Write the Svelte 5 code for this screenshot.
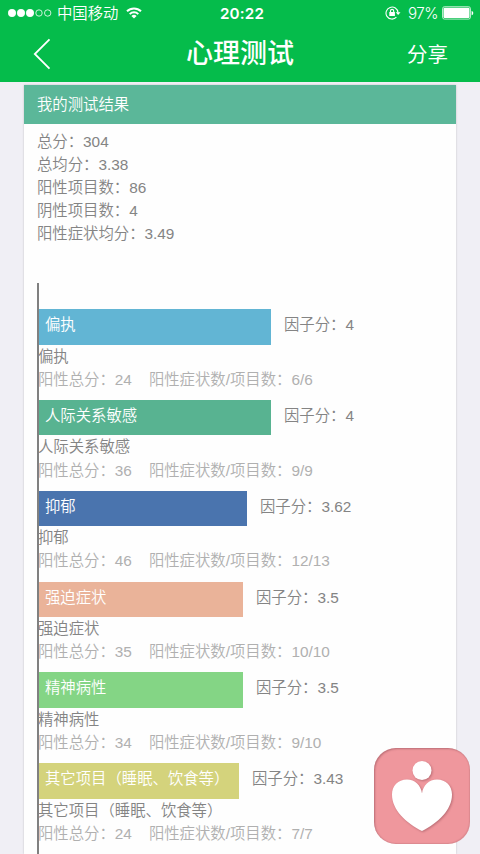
<script>
  const summary = [
    { label: '总分', value: '304' },
    { label: '总均分', value: '3.38' },
    { label: '阳性项目数', value: '86' },
    { label: '阴性项目数', value: '4' },
    { label: '阳性症状均分', value: '3.49' },
  ]

  const factors = [
    { name: '偏执', score: '4', total: 24, items: '6/6', width: 232, color: '#62b5d4' },
    { name: '人际关系敏感', score: '4', total: 36, items: '9/9', width: 232, color: '#58b391' },
    { name: '抑郁', score: '3.62', total: 46, items: '12/13', width: 208, color: '#4a74ae' },
    { name: '强迫症状', score: '3.5', total: 35, items: '10/10', width: 204, color: '#eab399' },
    { name: '精神病性', score: '3.5', total: 34, items: '9/10', width: 204, color: '#84d585' },
    { name: '其它项目（睡眠、饮食等）', score: '3.43', total: 24, items: '7/7', width: 200, color: '#d4d37c' },
  ]
</script>

<div class="screen">
  <header>
    <div class="status">
      <div class="carrier">
        <svg class="signal" viewBox="0 0 44 8" aria-hidden="true">
          <circle cx="4" cy="4" r="3.7" fill="#fff" />
          <circle cx="13" cy="4" r="3.7" fill="#fff" />
          <circle cx="22" cy="4" r="3.7" fill="#fff" />
          <circle cx="31" cy="4" r="3.2" />
          <circle cx="39.7" cy="4" r="3.2" />
        </svg>
        <span>中国移动</span>
        <svg class="wifi" viewBox="0 0 16 12" aria-hidden="true">
          <path d="M1 4.3a10 10 0 0 1 14 0M3.7 7.1a6.2 6.2 0 0 1 8.6 0" />
          <path class="solid" d="M8 11.6 5.4 9a3.7 3.7 0 0 1 5.2 0z" />
        </svg>
      </div>
      <time>20:22</time>
      <div class="power">
        <svg class="lock" viewBox="0 0 16 14" aria-hidden="true">
          <path d="M11.4 11.2a6 6 0 1 1 1.6-4.6" />
          <path class="solid" d="M10.7 6.2h4.8l-2.4 2.7zM4.3 6.1h5.6v4H4.3z" />
          <path d="M5.5 6.3V5a1.6 1.6 0 0 1 3.2 0v1.3" />
        </svg>
        <span class="percent">97%</span>
        <svg class="battery" viewBox="0 0 32 14" aria-hidden="true">
          <rect x=".5" y=".7" width="28" height="12.4" rx="2" />
          <rect class="solid" x="1.5" y="1.7" width="26" height="10.4" rx="1" />
          <path class="solid" d="M29.6 4.7c2.2.8 2.2 3.8 0 4.6z" />
        </svg>
      </div>
    </div>
    <nav>
      <button class="back" type="button" aria-label="返回">
        <svg viewBox="0 0 18 32" aria-hidden="true"><path d="M16.5 1.3 1.8 16l14.7 14.7" /></svg>
      </button>
      <h1>心理测试</h1>
      <button class="share" type="button">分享</button>
    </nav>
  </header>

  <main>
    <section class="card">
      <h2>我的测试结果</h2>
      <div class="summary">
        {#each summary as row}
          <p>{row.label}：{row.value}</p>
        {/each}
      </div>

      <div class="chart">
        {#each factors as factor}
          <div class="factor">
            <div class="bar-row">
              <div class="bar" style="width: {factor.width}px; background: {factor.color}">{factor.name}</div>
              <span class="score">因子分：{factor.score}</span>
            </div>
            <p>{factor.name}</p>
            <p class="detail"><span>阳性总分：{factor.total}</span><span>阳性症状数/项目数：{factor.items}</span></p>
          </div>
        {/each}
      </div>
    </section>
  </main>

  <div class="badge">
    <svg viewBox="0 0 96 96" aria-hidden="true">
      <circle cx="48" cy="22.5" r="9.5" />
      <path d="M48 45.5C47 37.5 41 31.5 33 31.5 24 31.5 18 38 18 46.5 18 62 32 75 48 83 64 75 78 62 78 46.5 78 38 72 31.5 63 31.5 55 31.5 49 37.5 48 45.5Z" />
    </svg>
  </div>
</div>

<style>
  :global(body) {
    margin: 0;
  }

  .screen {
    position: relative;
    display: flex;
    flex-direction: column;
    width: 480px;
    height: 854px;
    overflow: hidden;
    background: #f0eff5;
    color: #848484;
    font: 350 15.36px/23.04px "Liberation Sans", "Noto Sans CJK SC", sans-serif;
  }

  h1, h2, p {
    margin: 0;
    font-weight: inherit;
  }

  header {
    flex: none;
    height: 82px;
    background: #05bc4b;
    color: #fff;
  }

  header svg {
    display: block;
    fill: none;
    stroke: #fff;
  }

  header .solid {
    fill: #fff;
    stroke: none;
  }

  .status {
    display: grid;
    grid-template-columns: 1fr auto 1fr;
    align-items: center;
    height: 27px;
    padding: 0 6px 0 8px;
  }

  .carrier, .power {
    display: flex;
    align-items: center;
  }

  .signal {
    width: 44px;
    height: 8px;
    margin-right: 5px;
    stroke-width: 0.8;
  }

  .wifi {
    width: 16px;
    height: 12px;
    margin-left: 8px;
    stroke-width: 2;
  }

  time {
    margin-left: 2px;
    font-family: Inter, "Liberation Sans", sans-serif;
    font-size: 15.2px;
    font-weight: 600;
    letter-spacing: 0.2px;
  }

  .power {
    justify-content: flex-end;
  }

  .percent {
    font-family: Inter, "Liberation Sans", sans-serif;
    font-size: 15.2px;
    font-weight: 350;
    letter-spacing: -0.5px;
  }

  .lock {
    width: 16px;
    height: 14px;
    margin-right: 7px;
    stroke-width: 1.1;
  }

  .battery {
    width: 32px;
    height: 14px;
    margin-left: 4px;
    stroke-width: 0.7;
  }

  nav {
    display: grid;
    grid-template-columns: 1fr auto 1fr;
    align-items: center;
    height: 53px;
    padding: 0 32px;
  }

  button {
    padding: 0;
    border: 0;
    background: none;
    color: inherit;
    font: inherit;
  }

  .back {
    justify-self: start;
    margin-left: 1px;
  }

  .back svg {
    width: 18px;
    height: 32px;
    stroke-width: 1.8;
  }

  h1 {
    font-size: 27px;
    font-weight: 500;
    line-height: 40px;
  }

  .share {
    justify-self: end;
    margin-top: 2px;
    font-size: 20.5px;
    font-weight: 400;
  }

  main {
    flex: 1;
    min-height: 0;
    padding: 3px 24px 0;
  }

  .card {
    height: 100%;
    background: #fefefe;
    box-shadow: 0 0 2px rgba(0, 0, 0, 0.2);
  }

  h2 {
    height: 38.5px;
    padding-left: 13px;
    background: #5bb799;
    color: #fff;
    font-size: 15.36px;
    line-height: 39px;
  }

  .summary {
    padding: 6px 13px 0;
  }

  .chart {
    margin: 38.3px 0 0 13px;
    padding-top: 26px;
    border-left: 2px solid #808080;
  }

  .factor {
    height: 90.85px;
  }

  .bar-row {
    display: flex;
    height: 35.6px;
    line-height: 31px;
  }

  .bar {
    box-sizing: border-box;
    padding-left: 6px;
    color: #fff;
    white-space: nowrap;
  }

  .score {
    margin-left: 13px;
  }

  .factor p {
    margin-left: -1px;
  }

  .detail {
    display: flex;
    gap: 17px;
    color: #b0b0b0;
  }

  .badge {
    position: absolute;
    right: 10px;
    bottom: 10px;
    width: 96px;
    height: 96px;
    border-radius: 22px;
    background: #ef979d;
    box-shadow: inset 1px 1px 2px rgba(110, 50, 60, 0.4), inset -1px -1px 1px rgba(110, 50, 60, 0.12);
  }

  .badge svg {
    display: block;
    fill: #fff;
    filter: drop-shadow(1px 1px 1px rgba(110, 50, 60, 0.4));
  }
</style>
